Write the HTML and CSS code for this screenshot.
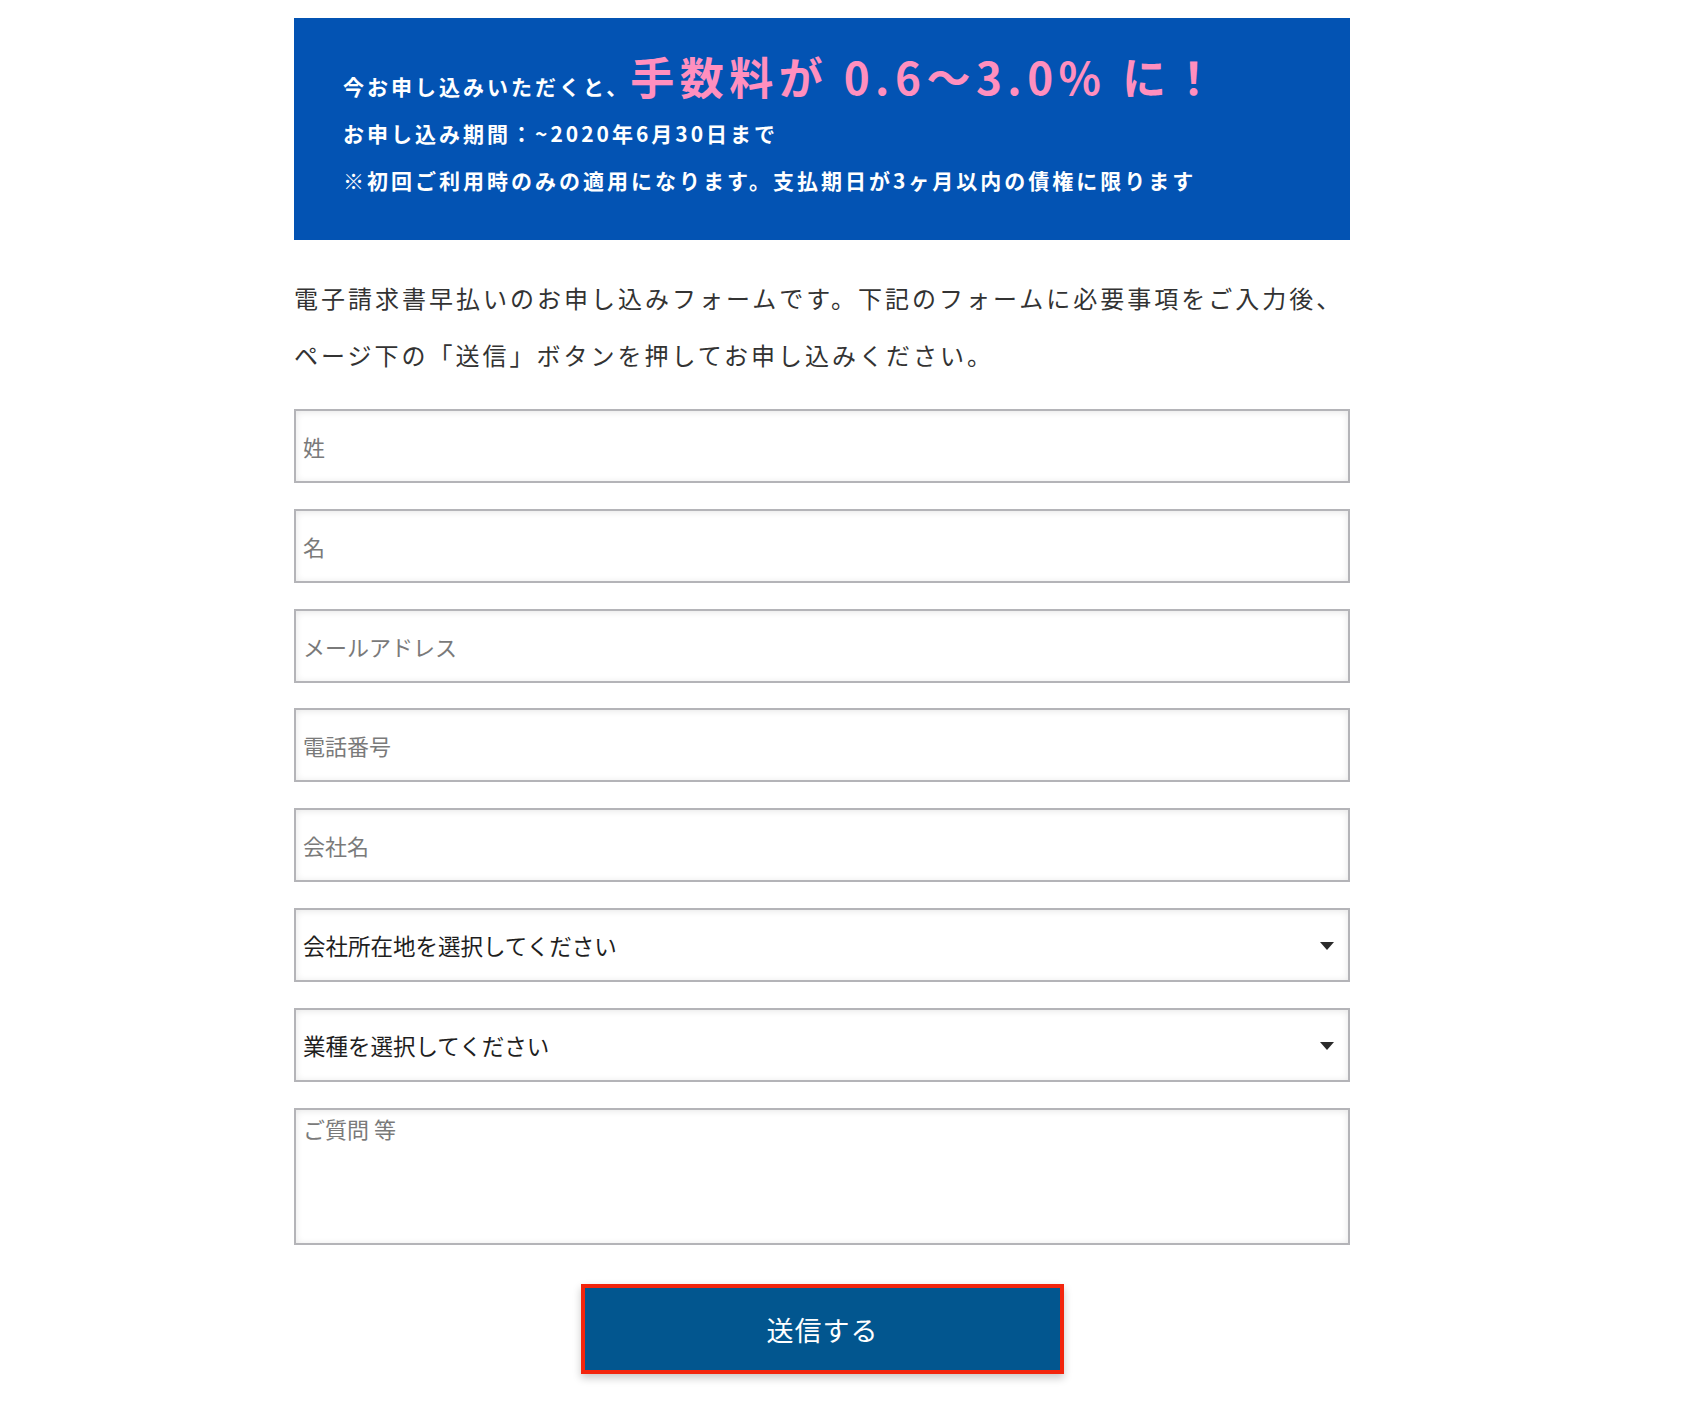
FILE: index.html
```html
<!DOCTYPE html>
<html lang="ja">
<head>
<meta charset="utf-8">
<title>電子請求書早払い お申し込みフォーム</title>
<link rel="stylesheet" href="styles.css">
</head>
<body>
<div class="page">
  <section class="banner">
    <p class="banner-lead">今お申し込みいただくと、<span class="banner-big">手数料が 0.6〜3.0% に！</span></p>
    <p class="banner-line">お申し込み期間：~2020年6月30日まで</p>
    <p class="banner-line">※初回ご利用時のみの適用になります。支払期日が3ヶ月以内の債権に限ります</p>
  </section>

  <p class="intro">電子請求書早払いのお申し込みフォームです。下記のフォームに必要事項をご入力後、<br>ページ下の「送信」ボタンを押してお申し込みください。</p>

  <form class="form">
    <input class="field" type="text" placeholder="姓">
    <input class="field" type="text" placeholder="名">
    <input class="field" type="email" placeholder="メールアドレス">
    <input class="field" type="tel" placeholder="電話番号">
    <input class="field" type="text" placeholder="会社名">
    <div class="select-wrap">
      <select class="field select">
        <option>会社所在地を選択してください</option>
      </select>
    </div>
    <div class="select-wrap">
      <select class="field select">
        <option>業種を選択してください</option>
      </select>
    </div>
    <textarea class="field textarea" placeholder="ご質問 等"></textarea>
    <div class="actions">
      <button class="submit" type="button">送信する</button>
    </div>
  </form>
</div>
</body>
</html>
```

FILE: styles.css
```css
html, body {
  margin: 0;
  padding: 0;
  background: #ffffff;
}

body {
  font-family: "Noto Sans CJK JP", "Noto Sans", sans-serif;
  color: #333333;
}

.page {
  width: 1056px;
  margin: 18px 0 0 294px;
  padding-bottom: 31px;
}

.banner {
  background: #0353b3;
  color: #ffffff;
  padding: 36px 48px 36px 49px;
  font-weight: 700;
}

.banner p {
  margin: 0;
}

.banner-lead {
  font-size: 21px;
  line-height: 1;
  letter-spacing: 3px;
}

.banner-big {
  font-size: 44px;
  line-height: 1;
  letter-spacing: 5.5px;
  color: #ff8fbe;
}

.banner-line {
  font-size: 21px;
  line-height: 47px;
  letter-spacing: 3px;
}

.banner-lead + .banner-line {
  margin-top: 12px;
}

.intro {
  margin: 29px 0 26px;
  font-size: 24px;
  line-height: 57px;
  letter-spacing: 3px;
  color: #333333;
  white-space: nowrap;
}

.form {
  display: flex;
  flex-direction: column;
  gap: 25.8px;
  margin: 0;
}

.field {
  box-sizing: border-box;
  display: block;
  width: 100%;
  height: 74px;
  margin: 0;
  padding: 0 7px;
  border: 2px solid #b4b4b8;
  border-radius: 0;
  background: #ffffff;
  box-shadow: inset 0 1px 7px rgba(0, 0, 0, 0.1);
  font-family: "Noto Sans CJK JP", "Noto Sans", sans-serif;
  font-size: 22px;
  color: #222222;
  outline: none;
}

.field::placeholder {
  color: #7a7a7a;
  opacity: 1;
}

.select-wrap {
  position: relative;
}

.select {
  -webkit-appearance: none;
  appearance: none;
  color: #1e1e1e;
  font-size: 22.5px;
  padding-right: 40px;
}

.select-wrap::after {
  content: "";
  position: absolute;
  right: 16px;
  top: 34px;
  width: 0;
  height: 0;
  border-left: 7px solid transparent;
  border-right: 7px solid transparent;
  border-top: 8px solid #2a2a2a;
  pointer-events: none;
}

.textarea {
  height: 137px;
  padding-top: 2px;
  resize: none;
  line-height: 1.5;
}

.actions {
  display: flex;
  justify-content: center;
  margin-top: 14px;
}

.submit {
  box-sizing: border-box;
  width: 483px;
  height: 90px;
  border: 4px solid #f3250d;
  background: #02568f;
  color: #ffffff;
  font-family: "Noto Sans CJK JP", "Noto Sans", sans-serif;
  font-size: 27px;
  letter-spacing: 1px;
  box-shadow: 0 4px 8px rgba(0, 0, 0, 0.22);
  cursor: pointer;
  margin-left: 1px;
}
```
